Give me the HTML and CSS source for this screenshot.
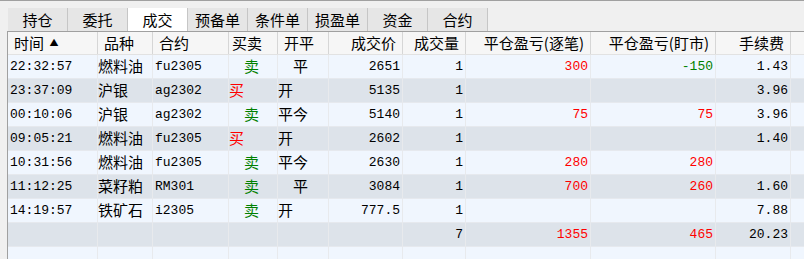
FILE: index.html
```html
<!DOCTYPE html>
<html lang="zh-CN">
<head>
<meta charset="utf-8">
<title>成交</title>
<link rel="stylesheet" href="styles.css">
</head>
<body>
<div class="top-line"></div>
<div class="tabs">
  <div class="tab first">持仓</div>
  <div class="tab">委托</div>
  <div class="tab active">成交</div>
  <div class="tab">预备单</div>
  <div class="tab">条件单</div>
  <div class="tab">损盈单</div>
  <div class="tab">资金</div>
  <div class="tab">合约</div>
</div>
<div class="table">
  <div class="row head">
    <div class="c hl">时间 <span class="sort">▲</span></div>
    <div class="c hl">品种</div>
    <div class="c hl">合约</div>
    <div class="c hl hs">买卖</div>
    <div class="c hl">开平</div>
    <div class="c hr">成交价</div>
    <div class="c hr">成交量</div>
    <div class="c hr">平仓盈亏(逐笔)</div>
    <div class="c hr">平仓盈亏(盯市)</div>
    <div class="c hr">手续费</div>
    <div class="c last"></div>
  </div>

  <div class="row odd">
    <div class="c num">22:32:57</div>
    <div class="c zh">燃料油</div>
    <div class="c num">fu2305</div>
    <div class="c zh ind sell">卖</div>
    <div class="c zh ind">平</div>
    <div class="c num r">2651</div>
    <div class="c num r">1</div>
    <div class="c num r red">300</div>
    <div class="c num r green">-150</div>
    <div class="c num r">1.43</div>
    <div class="c last"></div>
  </div>

  <div class="row even">
    <div class="c num">23:37:09</div>
    <div class="c zh">沪银</div>
    <div class="c num">ag2302</div>
    <div class="c zh buy">买</div>
    <div class="c zh">开</div>
    <div class="c num r">5135</div>
    <div class="c num r">1</div>
    <div class="c num r"></div>
    <div class="c num r"></div>
    <div class="c num r">3.96</div>
    <div class="c last"></div>
  </div>

  <div class="row odd">
    <div class="c num">00:10:06</div>
    <div class="c zh">沪银</div>
    <div class="c num">ag2302</div>
    <div class="c zh ind sell">卖</div>
    <div class="c zh">平今</div>
    <div class="c num r">5140</div>
    <div class="c num r">1</div>
    <div class="c num r red">75</div>
    <div class="c num r red">75</div>
    <div class="c num r">3.96</div>
    <div class="c last"></div>
  </div>

  <div class="row even">
    <div class="c num">09:05:21</div>
    <div class="c zh">燃料油</div>
    <div class="c num">fu2305</div>
    <div class="c zh buy">买</div>
    <div class="c zh">开</div>
    <div class="c num r">2602</div>
    <div class="c num r">1</div>
    <div class="c num r"></div>
    <div class="c num r"></div>
    <div class="c num r">1.40</div>
    <div class="c last"></div>
  </div>

  <div class="row odd">
    <div class="c num">10:31:56</div>
    <div class="c zh">燃料油</div>
    <div class="c num">fu2305</div>
    <div class="c zh ind sell">卖</div>
    <div class="c zh">平今</div>
    <div class="c num r">2630</div>
    <div class="c num r">1</div>
    <div class="c num r red">280</div>
    <div class="c num r red">280</div>
    <div class="c num r"></div>
    <div class="c last"></div>
  </div>

  <div class="row even">
    <div class="c num">11:12:25</div>
    <div class="c zh">菜籽粕</div>
    <div class="c num">RM301</div>
    <div class="c zh ind sell">卖</div>
    <div class="c zh ind">平</div>
    <div class="c num r">3084</div>
    <div class="c num r">1</div>
    <div class="c num r red">700</div>
    <div class="c num r red">260</div>
    <div class="c num r">1.60</div>
    <div class="c last"></div>
  </div>

  <div class="row odd">
    <div class="c num">14:19:57</div>
    <div class="c zh">铁矿石</div>
    <div class="c num">i2305</div>
    <div class="c zh ind sell">卖</div>
    <div class="c zh">开</div>
    <div class="c num r">777.5</div>
    <div class="c num r">1</div>
    <div class="c num r"></div>
    <div class="c num r"></div>
    <div class="c num r">7.88</div>
    <div class="c last"></div>
  </div>

  <div class="row even">
    <div class="c num"></div>
    <div class="c zh"></div>
    <div class="c num"></div>
    <div class="c zh"></div>
    <div class="c zh"></div>
    <div class="c num r"></div>
    <div class="c num r">7</div>
    <div class="c num r red">1355</div>
    <div class="c num r red">465</div>
    <div class="c num r">20.23</div>
    <div class="c last"></div>
  </div>

  <div class="row odd">
    <div class="c"></div>
    <div class="c"></div>
    <div class="c"></div>
    <div class="c"></div>
    <div class="c"></div>
    <div class="c"></div>
    <div class="c"></div>
    <div class="c"></div>
    <div class="c"></div>
    <div class="c"></div>
    <div class="c last"></div>
  </div>
</div>
</body>
</html>
```

FILE: styles.css
```css
html, body {
  margin: 0;
  padding: 0;
  background: #f0f0f0;
  width: 804px;
  height: 259px;
  overflow: hidden;
  font-family: "Noto Sans CJK SC", "Noto Sans", sans-serif;
  color: #000;
}

.top-line {
  height: 1px;
  background: #a0a0a0;
}

.tabs {
  display: flex;
  margin: 7px 0 0 8px;
  height: 23px;
}

.tab {
  width: 59px;
  height: 23px;
  border-right: 1px solid #c6c6c6;
  background: #e6e6e6;
  font-size: 15px;
  line-height: 23px;
  text-align: center;
}

.tab.active {
  background: #ffffff;
}

.table {
  margin-left: 7px;
  border-left: 1px solid #a0a0a0;
  border-top: 1px solid #a0a0a0;
  background: #f0f6fe;
}

.row {
  display: grid;
  grid-template-columns: 90px 55px 76px 49px 51px 74px 63px 125px 125px 75px 1fr;
  height: 24px;
  box-sizing: border-box;
  border-bottom: 1px solid #e6e9ee;
}

.row.head {
  height: 23px;
  background: #f6f6f6;
  border-bottom: 1px solid #e2e2e2;
}

.row.odd { background: #f0f6fe; }
.row.even { background: #dde3ea; }

.c {
  box-sizing: border-box;
  border-right: 1px solid #e8eaed;
  white-space: nowrap;
  overflow: hidden;
  line-height: 23px;
}

.head .c {
  border-right: 1px solid #d6d6d6;
  font-size: 15px;
  line-height: 22px;
}

.c.last { border-right: none; }
.head .c.last { border-right: none; }

.hl { padding-left: 6px; }
.hl.hs { padding-left: 3px; }
.hr { text-align: right; padding-right: 6px; }

.sort {
  font-size: 9px;
  vertical-align: 3px;
  margin-left: 2px;
}

.num {
  font-family: "Liberation Mono", "DejaVu Sans Mono", monospace;
  font-size: 13px;
  padding-left: 2px;
}

.num.r {
  text-align: right;
  padding-left: 0;
  padding-right: 2px;
}

.zh {
  font-size: 15px;
  line-height: 22px;
  padding-left: 0;
}

.ind { padding-left: 15px; }

.sell { color: #008000; }
.buy { color: #ff0000; }
.red { color: #ff0000; }
.green { color: #008000; }
```
